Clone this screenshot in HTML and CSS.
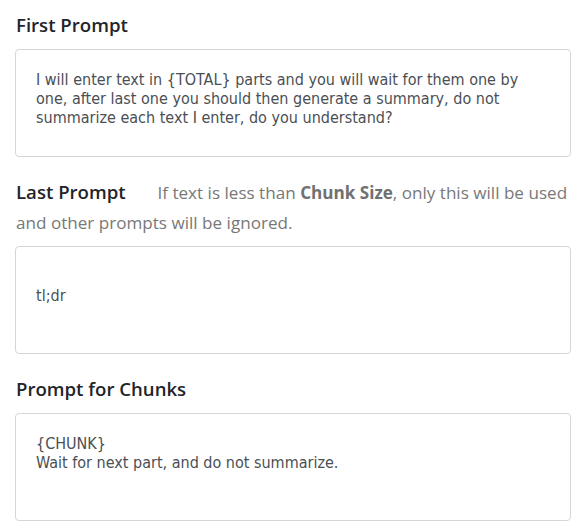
FILE: index.html
```html
<!DOCTYPE html>
<html lang="en">
<head>
    <meta charset="UTF-8">
    <meta name="viewport" content="width=device-width, initial-scale=1.0">
    <title>Prompts</title>
    <link rel="stylesheet" href="styles.css">
</head>
<body>
    <div class="container">
        <div class="field">
            <label for="firstPrompt">First Prompt</label>
            <textarea id="firstPrompt">I will enter text in {TOTAL} parts and you will wait for them one by one, after last one you should then generate a summary, do not summarize each text I enter, do you understand?</textarea>
        </div>
        <div class="field">
            <label for="lastPrompt">Last Prompt <span class="hint">If text is less than <b>Chunk Size</b>, only this will be used and other prompts will be ignored.</span></label>
            <textarea id="lastPrompt">

tl;dr</textarea>
        </div>
        <div class="field">
            <label for="chunkPrompt">Prompt for Chunks</label>
            <textarea id="chunkPrompt">{CHUNK}
Wait for next part, and do not summarize.</textarea>
        </div>
    </div>
</body>
</html>
```

FILE: styles.css
```css
body {
    margin: 0;
    background: #ffffff;
    font-family: 'Open Sans', 'Noto Sans', sans-serif;
}

.container {
    display: flex;
    flex-direction: column;
    gap: 20px;
    padding: 10px 11px 0 15px;
}

.field {
    display: flex;
    flex-direction: column;
    gap: 9px;
}

label {
    display: block;
    padding-left: 1px;
    font-size: 18.6px;
    font-weight: 600;
    line-height: 30px;
    color: #212529;
}

.hint {
    margin-left: 27px;
    font-size: 17.1px;
    font-weight: 400;
    line-height: 1;
    color: #787878;
}

.hint b {
    font-weight: 700;
    color: #707070;
}

textarea {
    display: block;
    width: 100%;
    height: 108px;
    box-sizing: border-box;
    padding: 20px 20px;
    border: 1px solid #d3d6da;
    border-radius: 4px;
    font-family: 'DejaVu Sans', sans-serif;
    font-stretch: condensed;
    font-size: 16px;
    line-height: 19px;
    color: #4a4f55;
    background: #fff;
    resize: none;
    outline: none;
    overflow: hidden;
}
```
